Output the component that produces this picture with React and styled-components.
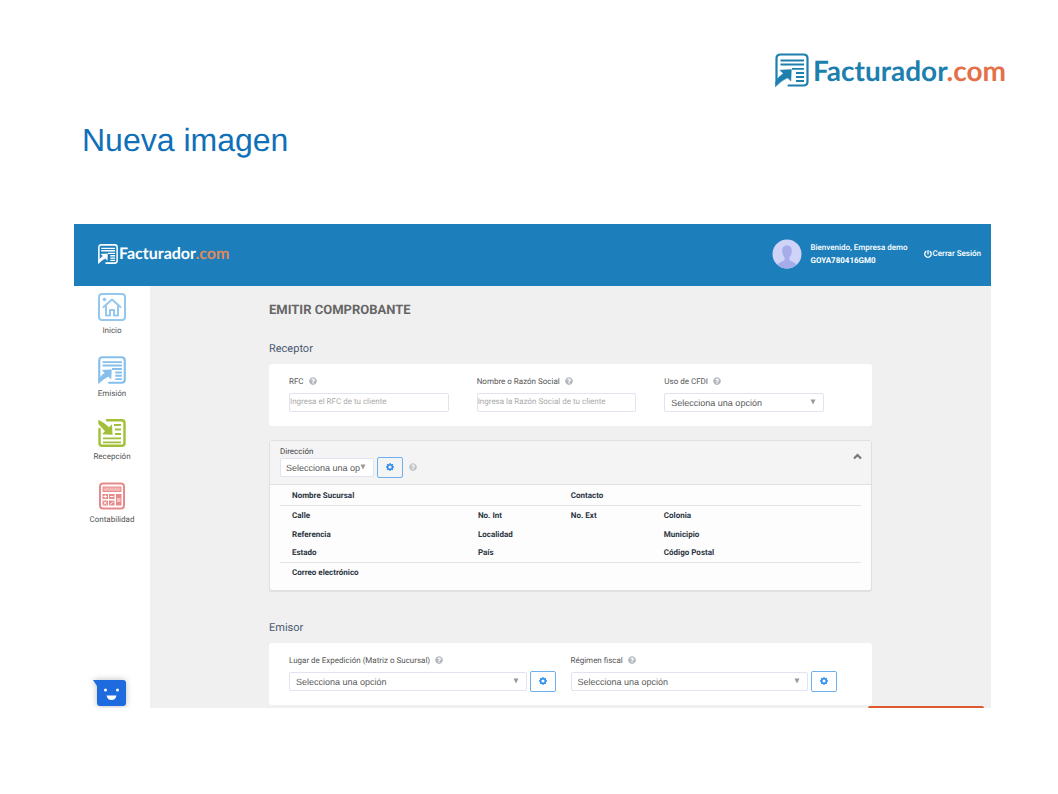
import React from "react";
import styled, { createGlobalStyle } from "styled-components";
import { FaQuestionCircle, FaPowerOff } from "react-icons/fa";

const GlobalStyle = createGlobalStyle`
  * { box-sizing: border-box; }
  body {
    margin: 0;
    background: #fff;
    font-family: Roboto, "Liberation Sans", sans-serif;
    text-rendering: geometricPrecision;
  }
  button, input, select { text-rendering: inherit; }
`;

const Slide = styled.div`
  display: flex;
  flex-direction: column;
  padding: 50px 67px 86px 74px;
`;

const BrandRow = styled.div`
  display: flex;
  justify-content: flex-end;
  margin-right: -15px;
`;

const Brand = styled.a`
  display: flex;
  align-items: center;
  gap: ${(p) => (p.$small ? 1 : 4)}px;
  height: ${(p) => (p.$small ? 20 : 40)}px;
  color: ${(p) => (p.$small ? "#fff" : "#1c7fae")};
  font: 700 ${(p) => (p.$small ? 16 : 28)}px Lato, sans-serif;
  text-decoration: none;
  white-space: nowrap;

  em {
    font-style: normal;
    color: ${(p) => (p.$small ? "#e08a5c" : "#e4704a")};
  }
`;

const SlideTitle = styled.h1`
  margin: 30px 0 64px;
  padding-left: 8px;
  color: #0f6fb8;
  font: 400 32px/40px "Liberation Sans", Arial, sans-serif;
`;

const Window = styled.div`
  position: relative;
  overflow: hidden;
  background: #f0f0f0;
`;

const TopBar = styled.header`
  display: flex;
  align-items: center;
  height: 62px;
  padding: 0 10px 3px 24px;
  background: #1c7fbc;
  color: #fff;
  font-size: 8px;
  font-weight: 500;
`;

const User = styled.div`
  display: flex;
  align-items: center;
  gap: 8px;
  margin-left: auto;
  line-height: 13px;

  strong { display: block; font-weight: 700; }
`;

const LogoutButton = styled.button`
  display: flex;
  align-items: center;
  gap: 1px;
  margin-left: 16px;
  padding: 0;
  border: 0;
  background: none;
  color: inherit;
  font: inherit;
`;

const Body = styled.div`
  display: flex;
`;

const Sidebar = styled.nav`
  display: flex;
  flex-direction: column;
  align-items: center;
  flex: 0 0 76px;
  padding-top: 7px;
  background: #fff;
`;

const NavItem = styled.a`
  display: flex;
  flex-direction: column;
  align-items: center;
  gap: 2px;
  height: 63px;
  color: #555;
  font-size: 8px;
  line-height: 15px;
  text-decoration: none;
`;

const ChatButton = styled.button`
  margin: auto 5px 0 0;
  padding: 0;
  border: 0;
  background: none;
  line-height: 0;
  filter: drop-shadow(0 0 3px #0004);
`;

const Main = styled.main`
  flex: 1;
  min-width: 0;
  padding: 15px 119px 3px;
`;

const PageTitle = styled.h2`
  margin: 0 0 20px;
  color: #666;
  font-size: 13px;
  line-height: 20px;
  font-weight: 700;
`;

const SectionTitle = styled.h3`
  margin: 0;
  padding-bottom: 7px;
  color: #4b5a72;
  font-size: 11px;
  line-height: 16px;
  font-weight: 400;
`;

const Card = styled.section`
  display: grid;
  grid-template-columns: repeat(${(p) => p.$columns}, 1fr);
  height: 62px;
  padding: 10px 20px 0;
  border-radius: 3px;
  background: #fff;
`;

const LabelRow = styled.div`
  display: flex;
  align-items: center;
  gap: 5px;
  height: 14px;
  margin-bottom: 5px;
  color: #555;
  font-size: 8px;

  svg { color: #b4b8bf; }
`;

const Controls = styled.div`
  display: flex;
  align-items: center;
  gap: 3px;
  height: 18px;
  margin-right: ${(p) => (p.$wide ? 15 : 28)}px;
`;

const TextInput = styled.input`
  flex: 1;
  min-width: 0;
  height: 19px;
  padding: 0 0 1px;
  border: 1px solid #e1e4f0;
  border-radius: 2px;
  background: #fff;
  font: 400 8px Roboto, sans-serif;
  color: #555;

  &::placeholder { color: #aaa; opacity: 1; }
`;

const SelectBox = styled.span`
  display: flex;
  align-items: center;
  flex: ${(p) => (p.$width ? `0 0 ${p.$width}px` : 1)};
  min-width: 0;

  svg { flex: none; margin-left: -14px; pointer-events: none; }
`;

const Select = styled.select`
  width: 100%;
  height: 19px;
  padding: 2px ${(p) => (p.$compact ? "13px 0 5px" : "19px 0 6px")};
  border: 1px solid #e1e4f0;
  border-radius: 2px;
  appearance: none;
  background: #fff;
  color: #5a5a5a;
  font: 400 9px "Liberation Sans", Arial, sans-serif;
  text-overflow: clip;
`;

const GearButton = styled.button`
  display: grid;
  place-items: center;
  flex: none;
  width: 26px;
  height: 21px;
  padding: 0;
  border: 1px solid #6db0ee;
  border-radius: 2px;
  background: transparent;
`;

const AddressPanel = styled.section`
  margin: 14px 0 29px;
  border: 1px solid #e0e0e0;
  border-radius: 3px;
  background: #fdfdfd;
  box-shadow: 0 1px 1px #0001;
`;

const AddressHeader = styled.div`
  display: flex;
  justify-content: space-between;
  height: 44px;
  padding: 4px 9px 0 10px;
  border-bottom: 1px solid #e0e0e0;
  background: #f4f4f4;
  color: #444;
  font-size: 8px;
  line-height: 13px;
`;

const AddressControls = styled.div`
  display: flex;
  align-items: center;
  gap: 3px;
  height: 18px;

  > svg { margin-left: 3px; color: #c3c5c8; }
`;

const CollapseButton = styled.button`
  align-self: flex-start;
  margin-top: 8px;
  padding: 0;
  border: 0;
  background: none;
  line-height: 0;
`;

const AddressTable = styled.table`
  width: calc(100% - 20px);
  margin: 1px 10px 9px;
  table-layout: fixed;
  border-collapse: collapse;
`;

const AddressRow = styled.tr`
  height: 19px;
  border-bottom: ${(p) => (p.$line ? "1px solid #e4e6e8" : "0")};
`;

const Column = styled.col`
  width: ${(p) => p.$share}%;
`;

const FieldName = styled.th`
  padding: 2px 0 0 12px;
  color: #2b3442;
  font-size: 8px;
  line-height: 12px;
  font-weight: 700;
  text-align: left;
  white-space: nowrap;
`;

const FooterAction = styled.div`
  position: absolute;
  right: 7px;
  bottom: 0;
  width: 116px;
  height: 2px;
  border-radius: 2px 2px 0 0;
  background: #dc5a2c;
`;

const ARROW_OUT = "M5 17.2 16.3 16.6 15.8 28 12.6 24.8C8 26.8 4 30 .5 33.8V30C1.600 26 4.800 23 8.400 20.600Z";

function SendDocument({ size, color = "currentColor", weight = 2 }) {
  return (
    <svg width={size} height={size} viewBox="0 0 34 34" fill="none" stroke={color} strokeWidth={weight} aria-hidden="true">
      <path d="M1.500 30V5.500Q1.500 1.500 5.500 1.500H28.500Q32.500 1.500 32.500 5.500V28.500Q32.500 32.500 28.500 32.500H13.500" strokeLinecap="round" />
      <path d="M5.500 7.500H29M5.500 11.500H29M17 15.800H29M21 20H29M21 24H29M21 28H29" strokeWidth={weight - 0.4} />
      <path d={ARROW_OUT} fill={color} stroke={color} strokeWidth="0.600" />
    </svg>
  );
}

function HomeIcon() {
  return (
    <svg width="28" height="28" viewBox="0 0 28 28" fill="none" stroke="#94c8ef" strokeWidth="2" strokeLinejoin="round" strokeLinecap="round" aria-hidden="true">
      <rect x="1" y="1" width="26" height="26" rx="3" />
      <path d="M5.500 14 14 6.500 22.500 14M8 13V22.500H12V17H16V22.500H20V13" strokeWidth="2" />
      <circle cx="6.500" cy="6.500" r="1.800" fill="#94c8ef" stroke="none" />
    </svg>
  );
}

function ReceiveIcon() {
  return (
    <svg width="28" height="28" viewBox="0 0 28 28" fill="none" stroke="#a2c037" strokeWidth="2.400" aria-hidden="true">
      <path d="M1.500 10V24Q1.500 26.700 4.200 26.700H23.800Q26.500 26.700 26.500 24V4Q26.500 1.300 23.800 1.300H9" strokeLinecap="round" />
      <path d="M16 6H23M17 10.500H23M17 15H23M5 19.300H23M5 23.300H23" strokeWidth="1.800" />
      <path d="M.3.800C4 2.500 8 5 11 8.200L14 5.300 14.500 15.800 4 15.300 7 12.200C4.500 9.500 2 7 .3 5Z" fill="#a2c037" stroke="none" />
    </svg>
  );
}

function CalculatorIcon() {
  return (
    <svg width="28" height="28" viewBox="0 0 28 28" fill="none" stroke="#e98a8a" strokeWidth="2" aria-hidden="true">
      <rect x="2" y="1.500" width="24" height="25" rx="3" />
      <rect x="5" y="5" width="18" height="4.500" fill="#f2b5b3" strokeWidth="1" />
      <g fill="#e98a8a" stroke="none">
        <rect x="4.500" y="12" width="5.500" height="5" />
        <rect x="11" y="12" width="5.500" height="5" />
        <rect x="4.500" y="18.500" width="5.500" height="5" />
        <rect x="11" y="18.500" width="5.500" height="5" />
        <rect x="18" y="12" width="5.500" height="11.500" />
      </g>
      <path d="M5.500 14.500H9M7.250 12.800V16.200M12 14.500H15.500M5.800 19.500 8.700 22.500M8.700 19.500 5.800 22.500M12.300 22.500 15.200 19.500M19 17H22.500M19 19H22.500" stroke="#fff" strokeWidth="1" />
    </svg>
  );
}

function ChatIcon() {
  return (
    <svg width="33" height="28" viewBox="0 0 33 28" aria-hidden="true">
      <path d="M0 0H30Q33 0 33 3V23Q33 26 30 26H7Q4 26 4 23V6Z" fill="#1e6be0" />
      <circle cx="12.500" cy="10" r="1.500" fill="#fff" />
      <circle cx="24.500" cy="10" r="1.500" fill="#fff" />
      <path d="M13.500 15.500H23.500Q22.500 20 18.500 20T13.500 15.500Z" fill="#fff" />
    </svg>
  );
}

function Avatar() {
  return (
    <svg width="30" height="30" viewBox="0 0 30 30" aria-hidden="true">
      <clipPath id="avatar-clip"><circle cx="15" cy="15" r="14.500" /></clipPath>
      <g clipPath="url(#avatar-clip)">
        <rect width="30" height="30" fill="#cfd3f8" />
        <path d="M15 6.500C18.600 6.500 20 9 19.800 12.500C19.600 15 18.800 17 17.500 18.300V21C20 23 24 23.500 25 27V30H5V27C6 23.500 10 23 12.500 21V18.300C11.200 17 10.400 15 10.200 12.500C10 9 11.400 6.500 15 6.500Z" fill="#a5ace9" />
      </g>
    </svg>
  );
}

function Gear() {
  return (
    <svg width="8" height="8" viewBox="0 0 16 16" fill="none" stroke="#2e8df0" aria-hidden="true">
      <circle cx="8" cy="8" r="4.700" strokeWidth="3" />
      <path d="M8 0V3M8 13V16M0 8H3M13 8H16M2.300 2.300 4.400 4.400M11.600 11.600 13.700 13.700M2.300 13.700 4.400 11.600M11.600 4.400 13.700 2.300" strokeWidth="2.600" />
    </svg>
  );
}

function Dropdown({ id, width }) {
  return (
    <SelectBox $width={width}>
      <Select id={id} $compact={Boolean(width)}>
        <option>Selecciona una opción</option>
      </Select>
      <svg width="6" height="6" viewBox="0 0 6 6" aria-hidden="true">
        <path d="M.5.500H5.500L3 5.500Z" fill="#999" />
      </svg>
    </SelectBox>
  );
}

function Field({ id, label, wide, children }) {
  return (
    <div>
      <LabelRow>
        <label htmlFor={id}>{label}</label>
        <FaQuestionCircle size={8} />
      </LabelRow>
      <Controls $wide={wide}>{children}</Controls>
    </div>
  );
}

function Logo({ small }) {
  return (
    <Brand href="#" $small={small}>
      <SendDocument size={small ? 20 : 34} weight={small ? 2.6 : 2.2} />
      <span>Facturador<em>.com</em></span>
    </Brand>
  );
}

export default function App() {
  return (
    <Slide>
      <GlobalStyle />
      <BrandRow><Logo /></BrandRow>
      <SlideTitle>Nueva imagen</SlideTitle>
      <Window>
        <TopBar>
          <Logo small />
          <User>
            <Avatar />
            <div>Bienvenido, Empresa demo<strong>GOYA780416GM0</strong></div>
          </User>
          <LogoutButton><FaPowerOff size={8} />Cerrar Sesión</LogoutButton>
        </TopBar>
        <Body>
          <Sidebar>
            <NavItem href="#"><HomeIcon />Inicio</NavItem>
            <NavItem href="#"><SendDocument size={28} color="#85bfeb" weight={2.6} />Emisión</NavItem>
            <NavItem href="#"><ReceiveIcon />Recepción</NavItem>
            <NavItem href="#"><CalculatorIcon />Contabilidad</NavItem>
            <ChatButton aria-label="Chat"><ChatIcon /></ChatButton>
          </Sidebar>
          <Main>
            <PageTitle>EMITIR COMPROBANTE</PageTitle>
            <SectionTitle>Receptor</SectionTitle>
            <Card $columns={3}>
              <Field id="rfc" label="RFC">
                <TextInput id="rfc" placeholder="Ingresa el RFC de tu cliente" />
              </Field>
              <Field id="nombre" label="Nombre o Razón Social">
                <TextInput id="nombre" placeholder="Ingresa la Razón Social de tu cliente" />
              </Field>
              <Field id="uso" label="Uso de CFDI"><Dropdown id="uso" /></Field>
            </Card>
            <AddressPanel>
              <AddressHeader>
                <div>
                  <label htmlFor="direccion">Dirección</label>
                  <AddressControls>
                    <Dropdown id="direccion" width={94} />
                    <GearButton aria-label="Configurar dirección"><Gear /></GearButton>
                    <FaQuestionCircle size={8} />
                  </AddressControls>
                </div>
                <CollapseButton aria-label="Contraer">
                  <svg width="9" height="7" viewBox="0 0 9 7" fill="none" stroke="#777" strokeWidth="2.200">
                    <path d="M1 5.500 4.500 2 8 5.500" />
                  </svg>
                </CollapseButton>
              </AddressHeader>
              <AddressTable>
                <colgroup>
                  <Column $share={32} />
                  <Column $share={16} />
                  <Column $share={16} />
                  <Column $share={36} />
                </colgroup>
                <tbody>
                  <AddressRow $line><FieldName colSpan={2}>Nombre Sucursal</FieldName><FieldName colSpan={2}>Contacto</FieldName></AddressRow>
                  <AddressRow><FieldName>Calle</FieldName><FieldName>No. Int</FieldName><FieldName>No. Ext</FieldName><FieldName>Colonia</FieldName></AddressRow>
                  <AddressRow><FieldName>Referencia</FieldName><FieldName colSpan={2}>Localidad</FieldName><FieldName>Municipio</FieldName></AddressRow>
                  <AddressRow $line><FieldName>Estado</FieldName><FieldName colSpan={2}>País</FieldName><FieldName>Código Postal</FieldName></AddressRow>
                  <AddressRow><FieldName colSpan={4}>Correo electrónico</FieldName></AddressRow>
                </tbody>
              </AddressTable>
            </AddressPanel>
            <SectionTitle>Emisor</SectionTitle>
            <Card $columns={2}>
              <Field id="lugar" label="Lugar de Expedición (Matriz o Sucursal)" wide>
                <Dropdown id="lugar" />
                <GearButton aria-label="Configurar lugar"><Gear /></GearButton>
              </Field>
              <Field id="regimen" label="Régimen fiscal" wide>
                <Dropdown id="regimen" />
                <GearButton aria-label="Configurar régimen"><Gear /></GearButton>
              </Field>
            </Card>
          </Main>
        </Body>
        <FooterAction />
      </Window>
    </Slide>
  );
}
